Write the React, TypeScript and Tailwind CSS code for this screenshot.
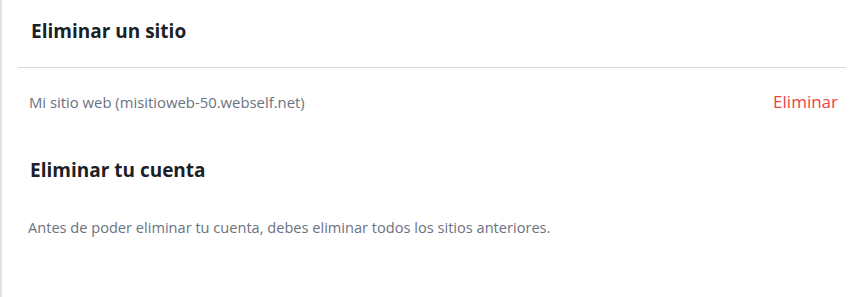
export default function App() {
  return (
    <div
      className="h-[297px] w-[862px] bg-white border-l-2 border-[#e2e2e2] text-[#1b1f27]"
      style={{ fontFamily: "'Open Sans', 'Noto Sans', sans-serif" }}
    >
      <div className="pl-[16px] pr-[16px]">
        <div className="px-[13px] pt-[19px] pb-[24px]">
          <h2 className="text-[19px] font-bold leading-[24px]">Eliminar un sitio</h2>
        </div>
        <div className="h-px bg-[#d5d8de]" />
        <div className="flex items-center justify-between pl-[11px] pr-[8px] pt-[24px] pb-[24px]">
          <span className="text-[14.85px] leading-[20px] text-[#6b7280]">
            Mi sitio web (misitioweb-50.webself.net)
          </span>
          <button className="text-[17px] leading-[20px] text-[#ea4348]">Eliminar</button>
        </div>
        <div className="px-[12px] pt-[22px]">
          <h2 className="text-[19px] font-bold leading-[24px]">Eliminar tu cuenta</h2>
          <p className="mt-[35px] -ml-[2px] text-[14.6px] leading-[20px] text-[#6b7280]">
            Antes de poder eliminar tu cuenta, debes eliminar todos los sitios anteriores.
          </p>
        </div>
      </div>
    </div>
  );
}
